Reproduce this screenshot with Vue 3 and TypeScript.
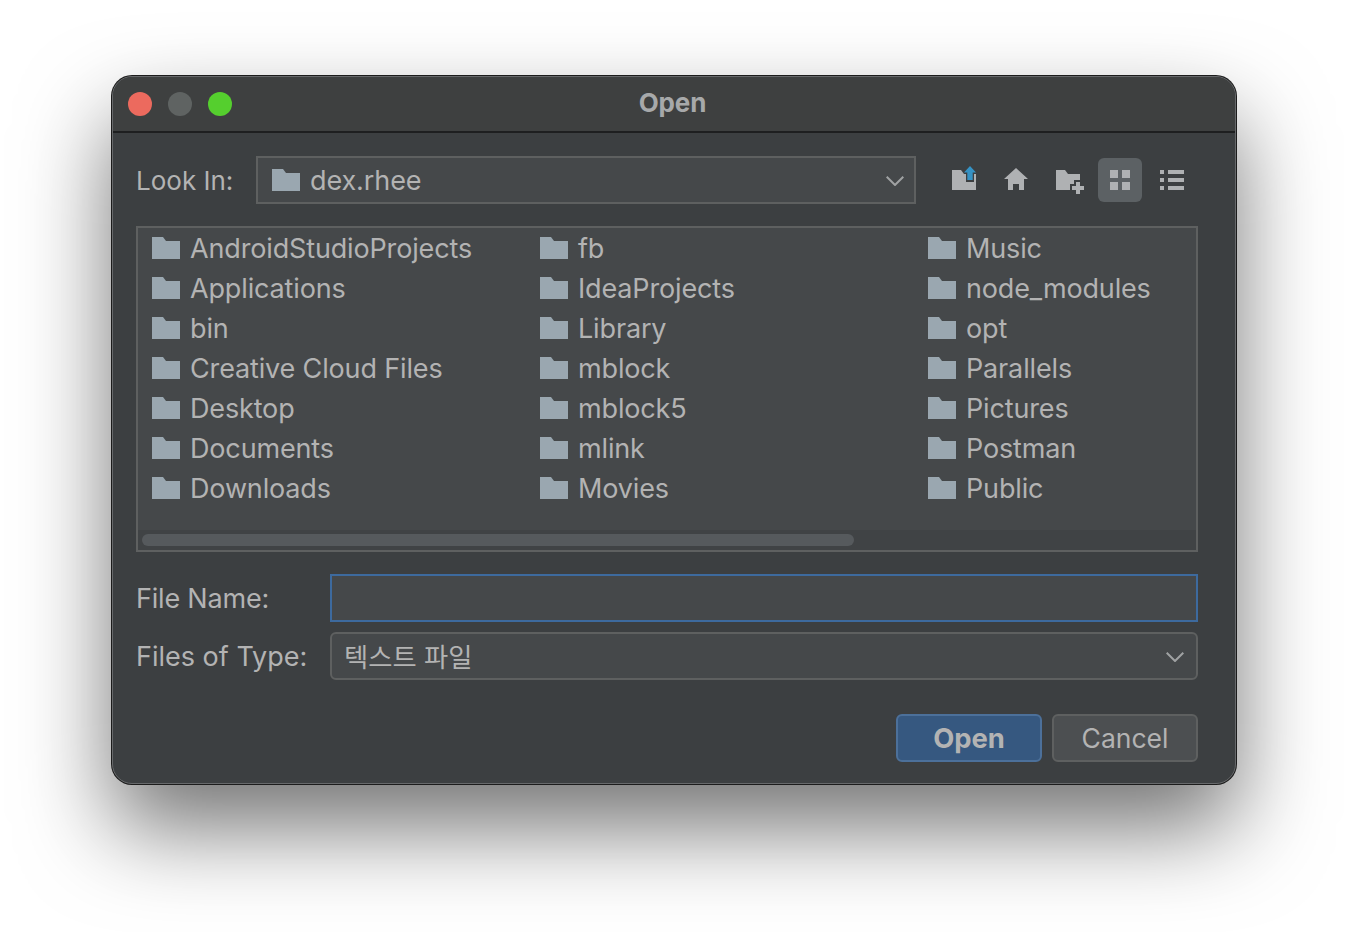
<script setup lang="ts">
const files: string[] = [
  'AndroidStudioProjects', 'Applications', 'bin', 'Creative Cloud Files', 'Desktop', 'Documents', 'Downloads',
  'fb', 'IdeaProjects', 'Library', 'mblock', 'mblock5', 'mlink', 'Movies',
  'Music', 'node_modules', 'opt', 'Parallels', 'Pictures', 'Postman', 'Public',
]
const folderPath = 'M0 0h11l3 4h14v18H0z'
</script>

<template>
  <div class="page">
    <div class="window">
      <header class="titlebar">
        <div class="lights">
          <span class="light light--close"></span>
          <span class="light light--min"></span>
          <span class="light light--max"></span>
        </div>
        <span class="title">Open</span>
      </header>

      <div class="body">
        <div class="look-row">
          <span class="label look-label">Look In:</span>
          <div class="combo combo--look">
            <svg class="folder" width="28" height="22" viewBox="0 0 28 22"><path :d="folderPath" /></svg>
            <span class="combo-text">dex.rhee</span>
            <svg class="chevron" width="18" height="10" viewBox="0 0 18 10"><path d="M.7.7L9 9 17.3.7" /></svg>
          </div>
          <div class="toolbar">
            <button class="tool">
              <svg width="28" height="28" viewBox="0 0 28 28">
                <path class="glyph" d="M2 4h9l3 4h2v8h8V8h2v16H2z" />
                <path class="arrow" d="M20 0l6 6.5h-3.3V14h-5.4V6.5H14z" />
              </svg>
            </button>
            <button class="tool">
              <svg width="28" height="28" viewBox="0 0 28 28">
                <path class="glyph" d="M14 2l12 11h-4v11h-5v-6h-6v6H6V13H2z" />
              </svg>
            </button>
            <button class="tool">
              <svg width="32" height="28" viewBox="0 0 32 28">
                <path class="glyph" d="M4 4h9l3 4h12v6h-6v4h-4v6H4z" />
                <path class="glyph" d="M24 16h4v4h4v4h-4v4h-4v-4h-4v-4h4z" />
              </svg>
            </button>
            <button class="tool tool--active">
              <svg width="20" height="20" viewBox="0 0 20 20">
                <path class="glyph" d="M0 0h8v8H0zM12 0h8v8h-8zM0 12h8v8H0zM12 12h8v8h-8z" />
              </svg>
            </button>
            <button class="tool">
              <svg width="24" height="20" viewBox="0 0 24 20">
                <path class="glyph" d="M0 0h4v4H0zM8 0h16v4H8zM0 8h4v4H0zM8 8h16v4H8zM0 16h4v4H0zM8 16h16v4H8z" />
              </svg>
            </button>
          </div>
        </div>

        <div class="list">
          <div class="list-grid">
            <div v-for="name in files" :key="name" class="file">
              <svg class="folder" width="28" height="22" viewBox="0 0 28 22"><path :d="folderPath" /></svg>
              <span>{{ name }}</span>
            </div>
          </div>
          <div class="scroll-track">
            <div class="scroll-thumb"></div>
          </div>
        </div>

        <div class="form">
          <span class="label label--name">File Name:</span>
          <div class="input"></div>
          <span class="label">Files of Type:</span>
          <div class="combo combo--type">
            <span class="combo-text combo-text--ko">텍스트 파일</span>
            <svg class="chevron chevron--type" width="18" height="10" viewBox="0 0 18 10"><path d="M.7.7L9 9 17.3.7" /></svg>
          </div>
        </div>

        <div class="buttons">
          <button class="btn btn--primary">Open</button>
          <button class="btn">Cancel</button>
        </div>
      </div>
    </div>
  </div>
</template>

<style>
html,
body {
  margin: 0;
  background: #ffffff;
}
</style>

<style scoped>
.page {
  box-sizing: border-box;
  width: 1348px;
  height: 932px;
  padding: 76px 112px 148px;
  overflow: hidden;
  font-family: Inter, "Noto Sans CJK KR", sans-serif;
  color: #b3b3b3;
}

.window {
  box-sizing: border-box;
  height: 708px;
  display: flex;
  flex-direction: column;
  background: #3c3f41;
  border-radius: 20px;
  overflow: hidden;
  border: 1px solid #67696b;
  box-shadow: 0 0 0 1px #1c1c1c, 0 44px 90px rgba(0, 0, 0, 0.55);
}

.titlebar {
  height: 56px;
  flex: none;
  display: flex;
  align-items: center;
  justify-content: center;
  position: relative;
  background: #3e4040;
  border-bottom: 2px solid #1e1f20;
  box-sizing: border-box;
}

.lights {
  position: absolute;
  left: 15px;
  top: 15px;
  display: flex;
  gap: 16px;
}

.light {
  width: 24px;
  height: 24px;
  border-radius: 50%;
}

.light--close {
  background: #ec6a5e;
}

.light--min {
  background: #5f6362;
}

.light--max {
  background: #55cf2e;
}

.title {
  font-size: 26px;
  font-weight: 700;
  color: #a7a9aa;
  margin: -3px 3px 0 0;
  letter-spacing: -0.1px;
}

.body {
  flex: 1;
  display: flex;
  flex-direction: column;
  padding: 23px 37px 0 23px;
}

.label {
  font-size: 27px;
  white-space: nowrap;
}

.label--name {
  letter-spacing: -0.2px;
}

.look-row {
  display: flex;
  align-items: center;
  height: 48px;
}

.look-label {
  width: 120px;
  flex: none;
  font-size: 26px;
}

.combo {
  box-sizing: border-box;
  height: 48px;
  display: flex;
  align-items: center;
  background: #45484a;
  border: 2px solid #5e6060;
  position: relative;
}

.combo--look {
  width: 660px;
  flex: none;
  padding-left: 14px;
  gap: 10px;
}

.combo--type {
  border-radius: 6px;
  padding-left: 12px;
}

.combo-text {
  font-size: 27px;
  letter-spacing: -0.1px;
}

.combo-text--ko {
  font-size: 26.3px;
  letter-spacing: 0;
  margin-top: -2px;
}

.chevron {
  position: absolute;
  right: 10px;
  top: 18px;
  fill: none;
  stroke: #a0a2a3;
  stroke-width: 2;
}

.chevron--type {
  right: 12px;
}

.folder {
  flex: none;
  fill: #9aa7b0;
}

.toolbar {
  display: flex;
  gap: 8px;
  margin-left: 26px;
}

.tool {
  width: 44px;
  height: 44px;
  padding: 0;
  display: flex;
  align-items: center;
  justify-content: center;
  background: none;
  border: 0;
  border-radius: 6px;
}

.tool--active {
  background: #5c6164;
}

.glyph {
  fill: #afb1b3;
}

.arrow {
  fill: #3592c4;
}

.list {
  box-sizing: border-box;
  height: 326px;
  margin-top: 22px;
  background: #45484a;
  border: 2px solid #5e6060;
  display: flex;
  flex-direction: column;
}

.list-grid {
  flex: 1;
  display: grid;
  grid-template-rows: repeat(7, 40px);
  grid-auto-flow: column;
  grid-auto-columns: 388px;
  padding-left: 14px;
}

.file {
  display: flex;
  align-items: center;
  gap: 10px;
  font-size: 27px;
  letter-spacing: -0.15px;
  white-space: nowrap;
}

.scroll-track {
  height: 20px;
  flex: none;
  padding: 4px;
  box-sizing: border-box;
  background: #404345;
}

.scroll-thumb {
  width: 712px;
  height: 12px;
  border-radius: 6px;
  background: #565a5d;
}

.form {
  display: grid;
  grid-template-columns: 194px 868px;
  grid-auto-rows: 48px;
  row-gap: 10px;
  align-items: center;
  margin-top: 22px;
}

.input {
  box-sizing: border-box;
  height: 48px;
  background: #45484a;
  border: 2px solid #3d6a9e;
}

.buttons {
  display: flex;
  justify-content: flex-end;
  gap: 10px;
  margin-top: 34px;
}

.btn {
  box-sizing: border-box;
  width: 146px;
  height: 48px;
  padding: 0;
  font: inherit;
  font-size: 26.5px;
  color: #b3b3b3;
  background: #4c4f51;
  border: 2px solid #5e6060;
  border-radius: 6px;
}

.btn--primary {
  font-size: 27.4px;
  font-weight: 700;
  background: #365880;
  border-color: #4c709a;
}
</style>
